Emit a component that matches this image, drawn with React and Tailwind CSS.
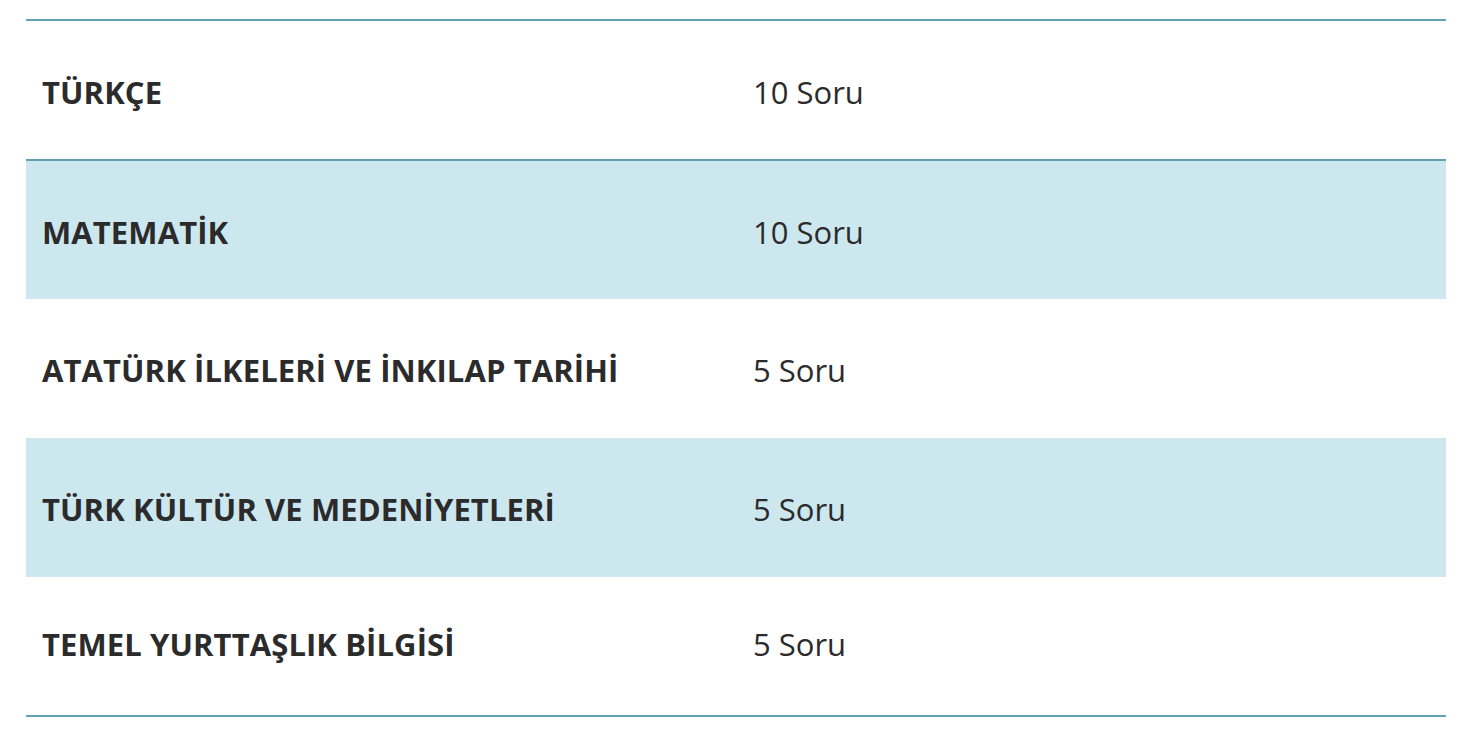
import React from "react";

const rows = [
  { name: "MATEMATİK", count: "10 Soru" },
  { name: "ATATÜRK İLKELERİ VE İNKILAP TARİHİ", count: "5 Soru" },
  { name: "TÜRK KÜLTÜR VE MEDENİYETLERİ", count: "5 Soru" },
  { name: "TEMEL YURTTAŞLIK BİLGİSİ", count: "5 Soru" },
];

function App() {
  return (
    <div
      className="min-h-screen bg-white px-[26px] pt-[19px] text-[#2b2b2b]"
      style={{ fontFamily: "'Open Sans', 'Liberation Sans', sans-serif" }}
    >
      <table className="w-[1420px] border-collapse text-left">
        <thead>
          <tr className="border-y-2 border-[#5f9fb1]">
            <th className="h-[140px] w-[711px] pl-4 pt-1 text-[31px] font-bold tracking-[0.1px]">
              TÜRKÇE
            </th>
            <td className="h-[140px] pl-[16px] pt-1 text-[31px]">10 Soru</td>
          </tr>
        </thead>
        <tbody className="border-b-2 border-[#5f9fb1]">
          {rows.map((row, i) => {
            const last = i === rows.length - 1;
            return (
              <tr key={row.name} className={i % 2 === 0 ? "bg-[#cde7ef]" : "bg-white"}>
                <th
                  className={
                    last
                      ? "h-[139px] pl-4 pb-1 text-[31px] font-bold tracking-[0.1px]"
                      : "h-[139px] pl-4 pt-1 text-[31px] font-bold tracking-[0.1px]"
                  }
                >
                  {row.name}
                </th>
                <td
                  className={
                    last
                      ? "h-[139px] pl-[16px] pb-1 text-[31px]"
                      : "h-[139px] pl-[16px] pt-1 text-[31px]"
                  }
                >
                  {row.count}
                </td>
              </tr>
            );
          })}
        </tbody>
      </table>
    </div>
  );
}

export default App;
